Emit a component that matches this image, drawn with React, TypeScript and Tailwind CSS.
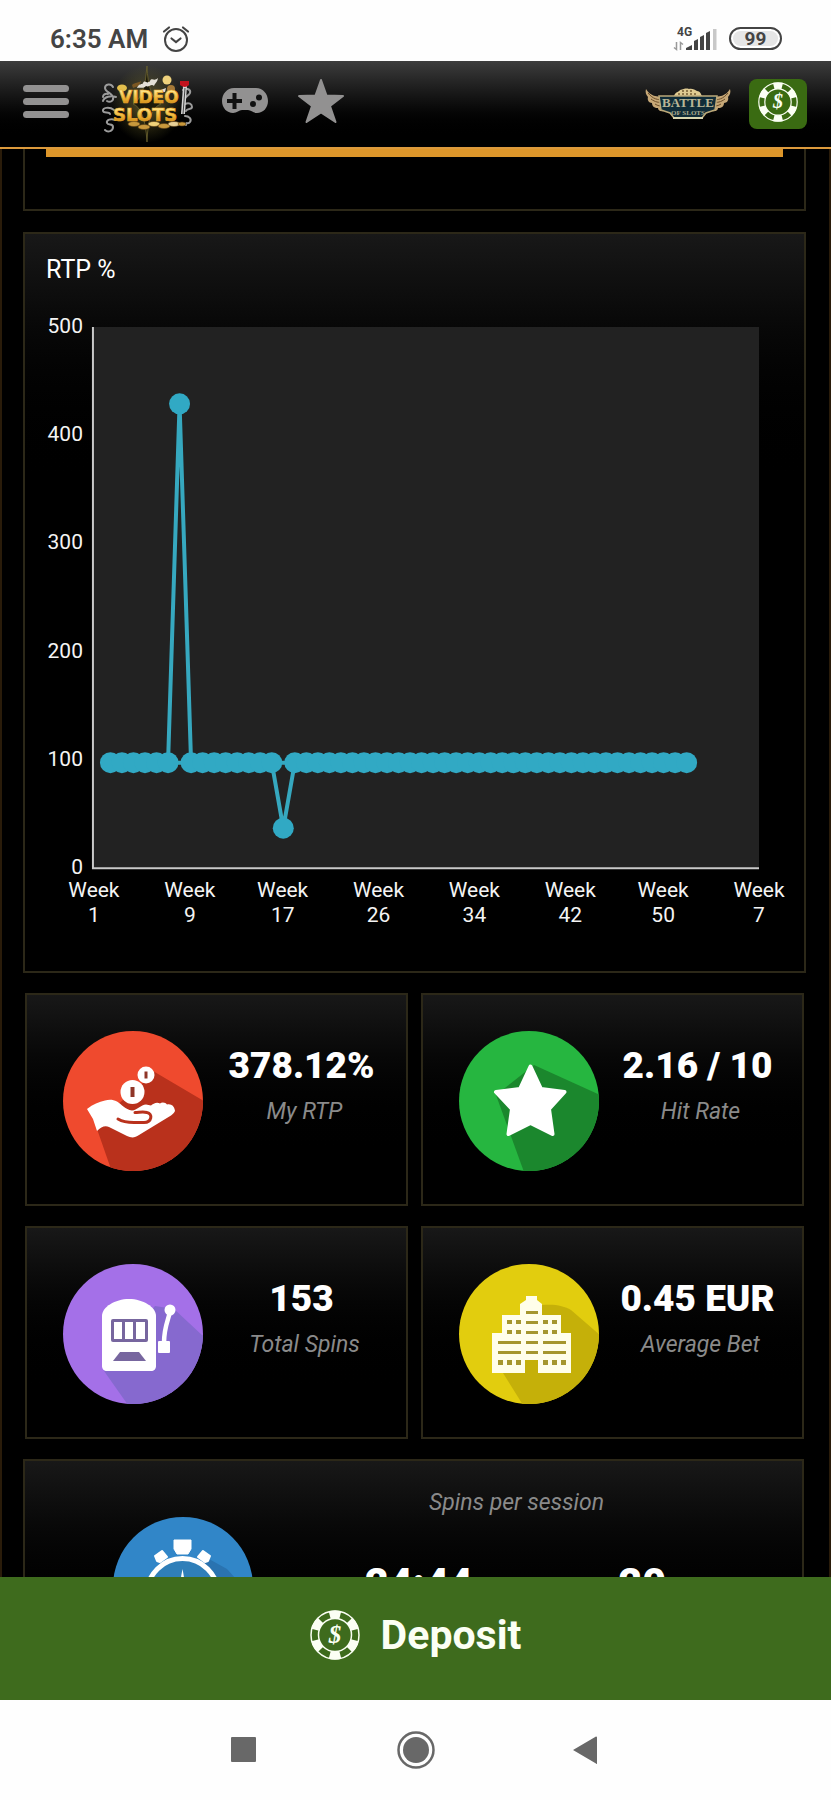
import type { ReactNode } from 'react';

type StatIcon = 'rtp' | 'hit' | 'spins' | 'bet';

interface Stat {
  icon: StatIcon;
  value: string;
  label: string;
}

const STATS: Stat[] = [
  { icon: 'rtp',   value: '378.12%',   label: 'My RTP' },
  { icon: 'hit',   value: '2.16 / 10', label: 'Hit Rate' },
  { icon: 'spins', value: '153',       label: 'Total Spins' },
  { icon: 'bet',   value: '0.45 EUR',  label: 'Average Bet' },
];

const PANEL = 'border-[#2c2818] bg-linear-to-b from-[#181818]';

/* ---------- status bar ---------- */

function StatusBar() {
  return (
    <div className="flex h-[61px] shrink-0 items-center justify-between bg-[#fefefe] pt-4 pr-[49px] pl-[50px] text-[#444]">
      <div className="flex items-center gap-3.5">
        <span className="text-[26px] leading-8 font-semibold">6:35 AM</span>
        <svg viewBox="0 0 28 28" className="h-7 w-7" fill="none" stroke="currentColor" strokeWidth="2" strokeLinecap="round">
          <circle cx="14" cy="15" r="11" />
          <path d="M9.500 13.500 14 17l4.500-3.500M2 6.500l5-4M26 6.500l-5-4" strokeWidth="2.200" />
        </svg>
      </div>
      <div className="flex items-center gap-3">
        <svg viewBox="0 0 44 28" className="h-7 w-11" fill="currentColor">
          <text x="4" y="11" className="text-[12px] font-bold">4G</text>
          <path d="M3.500 17v7.500l-2.500-2M7.500 25v-7.500l2.500 2" fill="none" stroke="#999" strokeWidth="1.500" />
          <path d="M13 25v-2l6-3v5zM21 16l4-2v11h-4zM27 12l4-2v15h-4zM33 8l4-2v19h-4z" />
          <path d="M40 4h3.500v21H40z" fill="#c8c8c8" />
        </svg>
        <div className="flex h-[23px] w-[53px] items-center justify-center rounded-full border-2 border-[#444] bg-white p-0.5">
          <span className="flex h-full w-full items-center justify-center rounded-full bg-[#e6e6e6] text-[19px] leading-4 font-bold">99</span>
        </div>
      </div>
    </div>
  );
}

/* ---------- header ---------- */

function VideoSlotsLogo() {
  return (
    <svg viewBox="0 0 92 80" className="h-20 w-[92px]">
      <defs>
        <linearGradient id="gold" x1="0" y1="0" x2="0" y2="1">
          <stop offset="0.200" stopColor="#ffe68a" />
          <stop offset="0.600" stopColor="#eeb02f" />
          <stop offset="1" stopColor="#b8710f" />
        </linearGradient>
        <radialGradient id="glow">
          <stop offset="0" stopColor="#8a7a35" stopOpacity="0.700" />
          <stop offset="1" stopColor="#6d6a2a" stopOpacity="0" />
        </radialGradient>
      </defs>
      <ellipse cx="46" cy="40" rx="36" ry="39" fill="url(#glow)" />
      <path d="M46 2q1 32 14 38-13 4-14 38-2-34-14-38 12-6 14-38z" fill="#1c1a0a" stroke="#6d6530" strokeWidth="0.800" />
      <g fill="none" stroke="#9b9b9b" strokeWidth="2" strokeLinecap="round">
        <path d="M12 23c-2-4-8-3-8 1s7 5 8 9-3 6-6 4M15 33c-5-2-12 0-13 4M13 46c-5-4-12-2-11 1s6 0 7 3M14 56c-4-2-9 0-8 3s6 0 6 4-5 6-8 3M7 30c-3-1-5 1-5 3" />
        <path d="M82 26c4-3 8 0 7 3s-5 3-5 6M84 40c4-2 7 0 7 3s-5 1-6 4M84 52c4 0 7 3 5 6s-4-1-4 3" />
      </g>
      <path d="M36 24c2-6 5-2 6-5 2-4 4 2 7-2 2-4 4 1 8-3-1 5-3 5-4 8-3-3-5 2-8 0-3 3-5 1-9 2zM57 27l8-3-1 4z" fill="#e4e0d6" />
      <path d="M31 21c3-3 7-2 9-4-1 4-4 6-8 7z" fill="#7b5723" />
      <circle cx="66" cy="16" r="4.500" fill="#efd27d" />
      <circle cx="70" cy="25" r="4" fill="#a57938" />
      <ellipse cx="21" cy="24" rx="5" ry="3.500" fill="#e3bf4c" />
      <path d="M82 22 80 50h4l2-28z" fill="#d4d4d4" />
      <path d="M84 24 82 50" stroke="#444" strokeWidth="1" />
      <path d="M79 17h9v4q-4 4-9 0z" fill="#c3121e" />
      <g fill="#c8983c" stroke="#5d4015" strokeWidth="0.600">
        <ellipse cx="33" cy="60" rx="6" ry="2.500" />
        <ellipse cx="43" cy="63" rx="6" ry="2.500" />
        <ellipse cx="53" cy="60" rx="6" ry="2.500" fill="#f0d27a" />
        <ellipse cx="63" cy="62" rx="6" ry="2.500" />
        <ellipse cx="73" cy="60" rx="6" ry="2.500" fill="#e7cf97" />
        <ellipse cx="81" cy="60" rx="4" ry="2" />
      </g>
      <text x="18" y="39" fill="url(#gold)" stroke="#e3a52c" strokeWidth="0.700" className="font-['DejaVu_Sans'] text-[17px] font-bold">VIDEO</text>
      <text x="12" y="57" fill="url(#gold)" stroke="#e3a52c" strokeWidth="0.700" className="font-['DejaVu_Sans'] text-[18px] font-bold">SLOTS</text>
    </svg>
  );
}

function BattleLogo() {
  return (
    <svg viewBox="0 0 86 32" className="h-8 w-[86px]">
      <path d="M1 1C5 8 11 9 22 9l-3 14c-4 1-6-1-6-3-4 0-6-2-6-5-3 0-5-3-4-6C1 7 0 4 1 1zM85 1C81 8 75 9 64 9l3 14c4 1 6-1 6-3 4 0 6-2 6-5 3 0 5-3 4-6 2-2 3-5 2-8z" fill="#c7a877" />
      <path d="M3 5c5 6 9 7 17 7M6 11c4 3 8 4 12 3M10 16c3 2 5 2 8 2M83 5c-5 6-9 7-17 7M80 11c-4 3-8 4-12 3M76 16c-3 2-5 2-8 2" fill="none" stroke="#6b4e2a" strokeWidth="1" />
      <path d="M29 8c1-4 5-4 6-6 4-1 6-2 9-1 3-1 6 1 8 2 3 0 4 3 5 5z" fill="#e0cb92" />
      <path d="M33 6h20M37 3h12" stroke="#765e34" strokeWidth="1.500" strokeDasharray="2 2" />
      <path d="M14 8h58l-2 14-9 3-4 5H29l-4-5-9-3z" fill="#102c38" stroke="#bba878" strokeWidth="1.500" />
      <path d="M28 30h30" stroke="#d8d6b0" strokeWidth="2" />
      <text x="43" y="19" textAnchor="middle" fill="#b9b696" className="font-['Liberation_Serif'] text-[13px] font-bold">BATTLE</text>
      <text x="43" y="27" textAnchor="middle" fill="#a9a98c" className="font-['Liberation_Serif'] text-[7px] font-bold">OF SLOTS</text>
    </svg>
  );
}

function Chip({ className }: { className: string }) {
  return (
    <svg viewBox="0 0 50 50" className={className} fill="none" stroke="#fbfff4">
      <circle cx="25" cy="25" r="24" strokeWidth="1.500" />
      <circle cx="25" cy="25" r="16.500" strokeWidth="1.500" />
      <circle cx="25" cy="25" r="20.500" strokeWidth="8" pathLength="12" strokeDasharray="1 1" transform="rotate(-105 25 25)" />
      <text x="25" y="33" textAnchor="middle" stroke="none" fill="#fbfff4" className="font-['Liberation_Serif'] text-[25px] font-bold italic">$</text>
    </svg>
  );
}

function Header() {
  return (
    <header className="flex h-[88px] shrink-0 items-center justify-between border-b-2 border-[#dc9a3c] bg-linear-to-b from-[#3d3d3d] to-black to-90% pr-6 pl-[23px] text-[#929191]">
      <div className="flex items-center">
        <button aria-label="Menu" className="mb-1.5 flex w-[46px] flex-col gap-1.5">
          <span className="h-[7px] w-full rounded-full bg-current" />
          <span className="h-[7px] w-full rounded-full bg-current" />
          <span className="h-[7px] w-full rounded-full bg-current" />
        </button>
        <a href="#home" aria-label="Home" className="ml-8">
          <VideoSlotsLogo />
        </a>
        <button aria-label="Games" className="mb-1.5 ml-7">
          <svg viewBox="0 0 48 26" className="h-[26px] w-12">
            <path d="M13 0h22c7 0 12 6 12 13s-5 12-11 12c-4 0-6-3-9-3h-6c-3 0-5 3-9 3C6 25 1 20 1 13S6 0 13 0z" fill="currentColor" />
            <path d="M11.500 5h4v6h5.500v4h-5.500v6h-4v-6H6v-4h5.500z" fill="#111" />
            <circle cx="38" cy="9.500" r="3" fill="#111" />
            <circle cx="32" cy="16" r="3" fill="#111" />
          </svg>
        </button>
        <button aria-label="Favourites" className="mb-1.5 ml-7">
          <svg viewBox="0 0 48 46" className="h-[46px] w-12" fill="currentColor" stroke="currentColor" strokeWidth="2" strokeLinejoin="round">
            <path d="M24 2l5.500 15.500L46 18 33 28l5.500 16L24 34.500 9.500 44 15 28 2 18l16.500-.5z" />
          </svg>
        </button>
      </div>
      <div className="flex items-center gap-[18px]">
        <a href="#battle" aria-label="Battle of Slots">
          <BattleLogo />
        </a>
        <button aria-label="Deposit" className="flex h-[50px] w-[58px] items-center justify-center rounded-lg bg-[#3a6b12] pb-1">
          <Chip className="h-10 w-10" />
        </button>
      </div>
    </header>
  );
}

/* ---------- chart ---------- */

// plot area inside the 738 x 650 drawing
const PLOT = { left: 47, right: 714, top: 21, bottom: 563 };

const POINTS = Array.from({ length: 51 }, (_, i) => (i === 6 ? 429 : i === 15 ? 37 : 97.5));

const WEEKS = [
  { week: 1,  x: 48 },
  { week: 9,  x: 144 },
  { week: 17, x: 237 },
  { week: 26, x: 333 },
  { week: 34, x: 429 },
  { week: 42, x: 525 },
  { week: 50, x: 618 },
  { week: 7,  x: 714 },
];

const toX = (i: number) => 64.5 + i * 11.54;
const toY = (v: number) => PLOT.bottom - (v / 500) * (PLOT.bottom - PLOT.top);

function RtpChart() {
  return (
    <svg viewBox="0 0 738 650" className="block w-full overflow-visible text-[21px]" fill="#f4f4f4" role="img" aria-label="RTP % per week">
      <rect x={PLOT.left} y={PLOT.top} width={PLOT.right - PLOT.left} height={PLOT.bottom - PLOT.top} fill="#222" />
      <path d={`M${PLOT.left} ${PLOT.top}V${PLOT.bottom}H${PLOT.right}`} fill="none" stroke="#c9c9c9" strokeWidth="2" />
      {[500, 400, 300, 200, 100, 0].map((v) => (
        <text key={v} x="37" y={toY(v) + 6} textAnchor="end">{v}</text>
      ))}
      {WEEKS.map(({ week, x }) => (
        <text key={week} y="592" textAnchor="middle">
          <tspan x={x}>Week</tspan>
          <tspan x={x} dy="25">{week}</tspan>
        </text>
      ))}
      <g fill="none" stroke="#36a8bf" strokeWidth="4">
        <path d={`M${toX(0)} ${toY(97.5)}H${toX(50)}`} />
        <polyline points={POINTS.map((v, i) => `${toX(i)},${toY(v)}`).join(' ')} strokeLinejoin="round" />
      </g>
      {POINTS.map((v, i) => (
        <circle key={i} cx={toX(i)} cy={toY(v)} r="10.500" fill="#31a9c4" />
      ))}
    </svg>
  );
}

/* ---------- round icons ---------- */

function Disc({ id, color, shade, shadow, children }: { id: string; color: string; shade: string; shadow: string; children: ReactNode }) {
  return (
    <svg viewBox="0 0 140 140" className="h-[140px] w-[140px] shrink-0">
      <clipPath id={id}>
        <circle cx="70" cy="70" r="70" />
      </clipPath>
      <circle cx="70" cy="70" r="70" fill={color} />
      <path d={shadow} fill={shade} clipPath={`url(#${id})`} />
      {children}
    </svg>
  );
}

function HandDisc() {
  return (
    <Disc id="disc-rtp" color="#ef4a2e" shade="#b9311c" shadow="M90 40l51 30v71H49L34 98l20-24 24-20z">
      <path
        d="M24 78c6-5 12-7 18-8.500 4-1 8-1 12 1 5 3 8 8 15 9 5 0 9-6 14-6l5 1c2-2 6-4 9-2 2-2 6-1 7 1 4-1 7 1 8 6 0 2-2 3-4 5L76 104c-4 3-8 3-12 1L46 96c-4-2-8 0-12 4l-4-12z"
        fill="#fff"
      />
      <path d="M55 88c5 3 10 3.500 16 3.500h10c8 0 9-9 3-10-4-1-8 0-12 0" fill="none" stroke="#b9311c" strokeWidth="3" strokeLinecap="round" />
      <circle cx="69.500" cy="61" r="12" fill="#fff" />
      <path d="M67.500 56h4v10h-4z" fill="#8f3527" />
      <circle cx="83" cy="44" r="8.500" fill="#fff" />
      <path d="M81.500 40.500h3v7h-3z" fill="#8f3527" />
    </Disc>
  );
}

function StarDisc() {
  return (
    <Disc id="disc-hit" color="#26b640" shade="#1b872d" shadow="M75 34l66 30v77H65L37 64z">
      <path
        d="M71.500 35.500L82 58l23.500 3L90 78l3.500 25L71.500 92 49.500 103 53 78 37 61l24-3z"
        fill="#fff"
        stroke="#fff"
        strokeWidth="4"
        strokeLinejoin="round"
      />
    </Disc>
  );
}

function SlotDisc() {
  return (
    <Disc id="disc-spins" color="#a470e8" shade="#8669cf" shadow="M111 45l30 28v68H65L41 107 92 42z">
      <path d="M39 52c0-9 13-17 27-17s27 8 27 17v50c0 3-2 5-5 5H44c-3 0-5-2-5-5z" fill="#fff" />
      <rect x="48" y="55" width="37" height="23" rx="2" fill="#77669f" />
      <path d="M51 58h8v17h-8zM62 58h8v17h-8zM73 58h9v17h-9z" fill="#fff" />
      <path d="M57 88h19l7 9H50z" fill="#77669f" />
      <path d="M107 47c-1 8-6 15-6 32" fill="none" stroke="#fff" strokeWidth="4.500" />
      <circle cx="107" cy="46" r="5.500" fill="#fff" />
      <rect x="95" y="77" width="12" height="12" rx="1" fill="#fff" />
    </Disc>
  );
}

function BuildingDisc() {
  return (
    <Disc id="disc-bet" color="#e2cd0e" shade="#c5b009" shadow="M83 41c14-1 22 1 29 5l29 25v70H64l-20-32z">
      <path d="M67 32h11v4l5 4v11h19v18h10v40H79V96H66v13H33V69h10V51h18V40l6-4z" fill="#fffeea" />
      <g fill="#a5962e">
        <path d="M67 47h12v3H67zM67 57h12v3H67zM67 67h12v3H67zM67 77h12v3H67zM67 87h12v3H67z" />
        <path d="M39 77h23v3H39zM84 77h23v3H84zM39 87h23v3H39zM84 87h23v3H84z" />
        <path d="M48 56h5v4h-5zM57 56h5v4h-5zM84 56h5v4h-5zM93 56h5v4h-5zM48 66h5v4h-5zM57 66h5v4h-5zM84 66h5v4h-5zM93 66h5v4h-5z" />
        <path d="M39 96h5v5h-5zM48 96h5v5h-5zM57 96h5v5h-5zM84 96h5v5h-5zM93 96h5v5h-5zM102 96h5v5h-5z" />
      </g>
    </Disc>
  );
}

function StopwatchDisc() {
  return (
    <Disc id="disc-session" color="#3186c8" shade="#2a73b0" shadow="M96 42l18 10 27 30v59H70L40 100z">
      <circle cx="69.500" cy="77" r="35.500" fill="#2f7fb9" stroke="#fff" strokeWidth="5" />
      <path d="M61 23h17v9l-3 5H64l-3-5z" fill="#fff" stroke="#fff" strokeLinejoin="round" />
      <path d="M42 39l7-5 5 6-7 5-3-1zM97 39l-7-5-5 6 7 5 3-1z" fill="#fff" stroke="#fff" strokeWidth="2" strokeLinejoin="round" />
      <path d="M69.500 52l4 22h-8z" fill="#fff" />
    </Disc>
  );
}

function StatDisc({ icon }: { icon: StatIcon }) {
  if (icon === 'rtp') return <HandDisc />;
  if (icon === 'hit') return <StarDisc />;
  if (icon === 'spins') return <SlotDisc />;
  return <BuildingDisc />;
}

/* ---------- cards ---------- */

function StatCard({ stat }: { stat: Stat }) {
  return (
    <article className={`${PANEL} flex to-black to-80% border-2 pt-9 pr-1.5 pb-[33px] pl-9`}>
      <StatDisc icon={stat.icon} />
      <div className="flex-1 pt-[13px] text-center">
        <p className="text-[37px] leading-[44px] font-black whitespace-nowrap text-white">{stat.value}</p>
        <p className="mt-2.5 pl-1.5 text-[23px] leading-7 text-[#8a8a8a] italic">{stat.label}</p>
      </div>
    </article>
  );
}

function SessionCard() {
  return (
    <article className={`${PANEL} mt-5 mr-0.5 flex to-black to-80% border-2 pr-12 pb-9 pl-[88px]`}>
      <div className="pt-14">
        <StopwatchDisc />
      </div>
      <div className="ml-[54px] flex-1 pt-7 text-center">
        <p className="pr-7 text-[23px] leading-7 text-[#8a8a8a] italic">Spins per session</p>
        <div className="mt-[42px] grid grid-cols-2 text-[41px] leading-[48px] font-black text-white">
          <p>24:44</p>
          <p>20</p>
        </div>
      </div>
    </article>
  );
}

function NavBar() {
  return (
    <nav className="flex h-[100px] shrink-0 items-center justify-center gap-[134px] bg-[#fefefe] text-[#686868]">
      <button aria-label="Recent apps">
        <svg viewBox="0 0 38 38" className="h-[38px] w-[38px]" fill="currentColor">
          <rect x="6" y="6" width="25" height="25" rx="1" />
        </svg>
      </button>
      <button aria-label="Home screen">
        <svg viewBox="0 0 38 38" className="h-[38px] w-[38px]" fill="currentColor">
          <circle cx="19" cy="19" r="17.500" fill="none" stroke="currentColor" strokeWidth="2.500" />
          <circle cx="19" cy="19" r="13" />
        </svg>
      </button>
      <button aria-label="Back">
        <svg viewBox="0 0 38 38" className="h-[38px] w-[38px]" fill="currentColor">
          <path d="M4 19 27 5.500q1 0 1 1v26q0 1-1 0z" />
        </svg>
      </button>
    </nav>
  );
}

export default function App() {
  return (
    <div className="flex h-screen flex-col bg-black font-[Roboto,sans-serif]">
      <StatusBar />
      <Header />
      <main className="min-h-0 flex-1 overflow-hidden border-x-2 border-[#2a1c0a] bg-black pr-[23px] pl-[21px]">
        <section className="h-[62px] border-x-2 border-b-2 border-[#2c2818] px-[21px]">
          <div className="h-2 bg-[#dd962a]" />
        </section>
        <section className={`${PANEL} mt-[21px] border-2 to-black to-35% px-[21px] pt-5 pb-4`}>
          <h2 className="mb-5 text-[25px] leading-8 text-white">RTP %</h2>
          <RtpChart />
        </section>
        <div className="mt-5 grid grid-cols-2 gap-x-[13px] gap-y-5 px-0.5">
          {STATS.map((stat) => (
            <StatCard key={stat.label} stat={stat} />
          ))}
        </div>
        <SessionCard />
      </main>
      <button className="flex h-[123px] shrink-0 items-center justify-center gap-[21px] bg-[#3e6b1d] pb-2 text-[41px] leading-[48px] font-bold text-[#fbfff4]">
        <Chip className="h-[50px] w-[50px]" />
        Deposit
      </button>
      <NavBar />
    </div>
  );
}
